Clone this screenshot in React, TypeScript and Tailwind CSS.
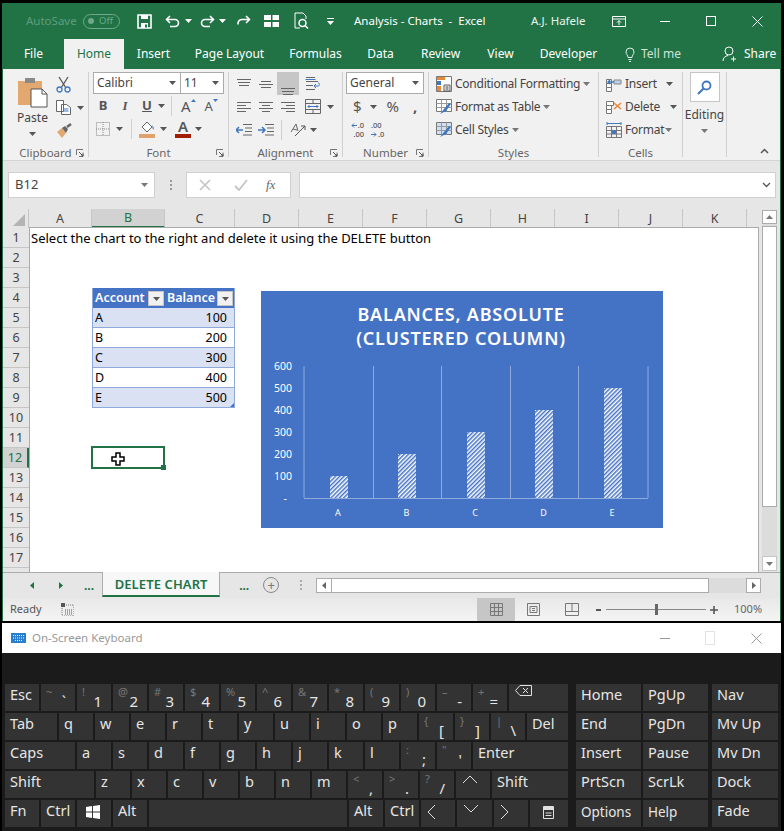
import type { ReactNode } from "react";

const GREEN = "#217346";

function Caret({ color = "#555", className = "" }: { color?: string; className?: string }) {
  return (
    <svg width="7" height="4" viewBox="0 0 7 4" className={`shrink-0 ${className}`}>
      <path d="M0 0h7L3.5 4z" fill={color} />
    </svg>
  );
}

function Launcher() {
  return (
    <svg width="8" height="8" viewBox="0 0 8 8" className="shrink-0">
      <path d="M0.5 6V0.5H7M7 3.5V7.5H3" fill="none" stroke="#777" />
      <path d="M3 3l4 4M5 7h2V5" fill="none" stroke="#555" />
    </svg>
  );
}

// horizontal text-alignment glyph
function Lines({ rows, color = "#666" }: { rows: [number, number, number][]; color?: string }) {
  return (
    <svg width="16" height="14" viewBox="0 0 16 14">
      {rows.map(([a, b, y]) => (
        <path key={y} d={`M${a} ${y + 0.5}H${b}`} stroke={color} />
      ))}
    </svg>
  );
}

function Group({ label, launcher, className, children }: { label: string; launcher?: boolean; className: string; children: ReactNode }) {
  return (
    <div className={`flex flex-col h-[85px] mt-[3px] border-r border-[#d0d0d0] ${className}`}>
      <div className="flex-1 flex flex-col min-h-0">{children}</div>
      <div className="h-[8px] flex items-center text-[11.5px] text-[#666] relative">
        <span className="flex-1 text-center">{label}</span>
        {launcher && <span className="absolute right-[4px] top-0 flex"><Launcher /></span>}
      </div>
    </div>
  );
}

function ListCmd({ icon, label, caretGap = "ml-[3px]" }: { icon: ReactNode; label: string; caretGap?: string }) {
  return (
    <div className="h-[23px] flex items-center text-[12px] text-[#444] tracking-[-0.25px]">
      <span className="w-[16px] h-[16px] flex mr-[3px]">{icon}</span>
      <span>{label}</span>
      <Caret className={caretGap} color="#777" />
    </div>
  );
}

function TitleBar() {
  return (
    <div className="h-[36px] flex items-center text-[#eaf3ee] text-[11.5px] shrink-0 whitespace-nowrap">
      <span className="ml-[23px] w-[50px] text-[11.5px] text-[#5f9c7c]">AutoSave</span>
      <span className="ml-[7px] w-[37px] h-[15px] rounded-full border border-[#6ea88a] flex items-center text-[9.5px] text-[#6ea88a] pl-[4px] gap-[5px]">
        <span className="w-[6px] h-[6px] rounded-full bg-[#6ea88a]" />
        Off
      </span>
      <svg width="15" height="15" viewBox="0 0 15 15" className="ml-[17px]">
        <path d="M1 1h13v13H1z" fill="none" stroke="#fff" strokeWidth="1.6" />
        <path d="M4 1h7v4H4zM4 9h7v5H4z" fill="#fff" />
        <path d="M8 10.5h2v3H8z" fill={GREEN} />
      </svg>
      <svg width="15" height="13" viewBox="0 0 15 13" className="ml-[13px]">
        <path d="M5 1L1.5 4.5 5 8M2 4.5h8a3.5 3.5 0 0 1 0 7H5" fill="none" stroke="#fff" strokeWidth="1.6" />
      </svg>
      <Caret color="#fff" className="ml-[5px]" />
      <svg width="15" height="13" viewBox="0 0 15 13" className="ml-[8px]">
        <path d="M10 1l3.5 3.5L10 8M13 4.5H5a3.5 3.5 0 0 0 0 7h5" fill="none" stroke="#fff" strokeWidth="1.6" />
      </svg>
      <Caret color="#fff" className="ml-[4px]" />
      <svg width="15" height="13" viewBox="0 0 15 13" className="ml-[10px]">
        <path d="M10 1l3.5 3.5L10 8M13 4.5H6a4 4 0 0 0-4 4v1" fill="none" stroke="#fff" strokeWidth="1.6" />
      </svg>
      <svg width="15" height="12" viewBox="0 0 15 12" className="ml-[13px]">
        <path d="M0 0h7v5H0zM8.500 0H15v5H8.500zM0 7h7v5H0zM8.500 7H15v5H8.500z" fill="#fff" />
      </svg>
      <svg width="15" height="18" viewBox="0 0 15 18" className="ml-[15px]">
        <path d="M1 1h8l3 3v3M1 1v15h5" fill="none" stroke="#fff" />
        <circle cx="8.5" cy="11" r="3.5" fill="none" stroke="#fff" strokeWidth="1.5" />
        <path d="M11 13.5l3 3" stroke="#fff" strokeWidth="1.5" />
      </svg>
      <svg width="7" height="7" viewBox="0 0 7 7" className="ml-[18px]">
        <path d="M0 0.5h7" stroke="#fff" />
        <path d="M0 3h7L3.5 7z" fill="#fff" />
      </svg>
      <span className="ml-[20px] w-[131px] text-[#fff]">Analysis - Charts&nbsp; -&nbsp; Excel</span>
      <span className="ml-[46px] w-[55px]">A.J. Hafele</span>
      <svg width="14" height="11" viewBox="0 0 14 11" className="ml-[26px]">
        <path d="M0.5 0.5h13v10H0.5zM0.5 3h13" fill="none" stroke="#fff" />
        <path d="M7 9V5M5 6.5l2-2 2 2" fill="none" stroke="#fff" />
      </svg>
      <span className="ml-[34px] w-[10px] h-px bg-white" />
      <span className="ml-[36px] w-[10px] h-[10px] border border-white" />
      <svg width="11" height="11" viewBox="0 0 11 11" className="ml-[36px]">
        <path d="M0.5 0.5l10 10M10.5 0.5l-10 10" stroke="#fff" />
      </svg>
    </div>
  );
}

function TabRow() {
  const tabs: [string, string][] = [
    ["Insert", "w-[59px]"],
    ["Page Layout", "w-[93px]"],
    ["Formulas", "w-[79px]"],
    ["Data", "w-[51px]"],
    ["Review", "w-[69px]"],
    ["View", "w-[51px]"],
    ["Developer", "w-[85px]"],
  ];
  return (
    <div className="h-[30px] flex items-center text-[12px] text-white shrink-0 whitespace-nowrap">
      <span className="w-[61px] text-center">File</span>
      <span className="w-[60px] h-full bg-[#f1f1f1] text-[#217346] flex items-center justify-center">Home</span>
      {tabs.map(([t, w]) => (
        <span key={t} className={`${w} text-center`}>{t}</span>
      ))}
      <svg width="10" height="15" viewBox="0 0 10 15" className="ml-[14px]">
        <path d="M3 10.5C3 8 1 7.5 1 5a4 4 0 0 1 8 0c0 2.500-2 3-2 5.500zM3.500 12.500h3M4 14.500h2" fill="none" stroke="#dfeee6" />
      </svg>
      <span className="ml-[6px] w-[45px] text-[#cfe3d8]">Tell me</span>
      <svg width="14" height="16" viewBox="0 0 14 16" className="ml-[36px]">
        <circle cx="7" cy="5" r="4" fill="none" stroke="#fff" />
        <path d="M1 15c0-3 2-5 5-5.500M9 13h5M11.500 10.500v5" fill="none" stroke="#fff" />
      </svg>
      <span className="ml-[8px]">Share</span>
    </div>
  );
}

function Clipboard() {
  return (
    <Group label="Clipboard" launcher className="w-[86px]">
      <div className="flex">
        <div className="w-[45px] ml-[7px] flex flex-col items-center">
          <svg width="30" height="31" viewBox="0 0 30 31" className="mt-[5px]">
            <path d="M0 4h24v24H0z" fill="#e2a86f" />
            <path d="M7 1h10v5H7z" fill="#8a8a8a" />
            <path d="M13 12h11l5 5v13H13z" fill="#fff" stroke="#555" />
            <path d="M24 12v5h5" fill="none" stroke="#555" />
          </svg>
          <span className="text-[12px] text-[#444] mt-[2px] leading-[16px]">Paste</span>
          <Caret className="mt-[6px]" />
        </div>
        <div className="flex flex-col ml-[1px] mt-[1px]">
          <div className="h-[23px] flex items-center">
            <svg width="15" height="17" viewBox="0 0 15 17">
              <path d="M3 1l7 11M12 1L5 12" stroke="#555" strokeWidth="1.300" fill="none" />
              <circle cx="3.500" cy="13.500" r="2.500" fill="none" stroke="#3f78c0" strokeWidth="1.300" />
              <circle cx="11.500" cy="13.500" r="2.500" fill="none" stroke="#3f78c0" strokeWidth="1.300" />
            </svg>
          </div>
          <div className="h-[23px] flex items-center gap-[6px]">
            <svg width="15" height="15" viewBox="0 0 15 15">
              <path d="M0.500 0.500h7v11h-7zM5.500 4.500h5l4 3v7h-9z" fill="#fff" stroke="#666" />
              <path d="M7.500 9h5M7.500 11h5" stroke="#3f78c0" />
            </svg>
            <Caret />
          </div>
          <div className="h-[23px] flex items-center">
            <svg width="16" height="15" viewBox="0 0 16 15">
              <path d="M1 9l5-4 4 5-4 5z" fill="#e2a86f" />
              <path d="M6 5l3-2 3 3-2 4z" fill="#666" />
              <path d="M11 4l4-3" stroke="#666" strokeWidth="2.500" />
            </svg>
          </div>
        </div>
      </div>
    </Group>
  );
}

function FontGroup() {
  const sep = <span className="w-px h-[20px] bg-[#d0d0d0]" />;
  return (
    <Group label="Font" launcher className="w-[140px]">
      <div className="flex ml-[4px] h-[22px] w-[131px] border border-[#ababab] bg-white text-[12px] text-[#444]">
        <div className="w-[87px] flex items-center justify-between pl-[3px] pr-[4px] border-r border-[#ababab]">
          Calibri
          <Caret />
        </div>
        <div className="flex-1 flex items-center justify-between pl-[3px] pr-[4px]">
          11
          <Caret />
        </div>
      </div>
      <div className="h-[22px] mt-[1px] flex items-center ml-[4px] text-[#555] text-[13px]">
        <span className="w-[20px] text-center font-bold">B</span>
        <span className="w-[24px] text-center italic font-['Liberation_Serif'] font-bold">I</span>
        <span className="w-[20px] text-center font-bold underline">U</span>
        <Caret className="ml-[1px]" />
        <span className="w-[6px]" />
        {sep}
        <span className="ml-[9px] text-[15px] leading-none">A</span>
        <svg width="5" height="3" viewBox="0 0 5 3" className="mb-[12px]"><path d="M0 3h5L2.500 0z" fill="#3f78c0" /></svg>
        <span className="ml-[9px] text-[13px] leading-none">A</span>
        <svg width="5" height="3" viewBox="0 0 5 3" className="mb-[12px]"><path d="M0 0h5L2.500 3z" fill="#3f78c0" /></svg>
      </div>
      <div className="h-[23px] flex items-center ml-[7px]">
        <svg width="14" height="14" viewBox="0 0 14 14">
          <path d="M0.500 0.500h13v13h-13zM7 0v14M0 7h14" fill="none" stroke="#888" strokeDasharray="1 1" />
        </svg>
        <Caret className="ml-[6px]" />
        <span className="w-[8px]" />
        {sep}
        <svg width="17" height="18" viewBox="0 0 17 18" className="ml-[7px]">
          <path d="M3 7l5-5 5 5-5 5z" fill="#fff" stroke="#666" />
          <path d="M13 5l2 3-1 2z" fill="#3f78c0" />
          <path d="M0 14h16v4H0z" fill="#e2a06a" />
        </svg>
        <Caret className="ml-[4px]" />
        <span className="ml-[8px] flex flex-col items-center w-[16px] leading-none">
          <span className="text-[15px] text-[#555] font-semibold leading-[13px]">A</span>
          <span className="w-[16px] h-[4px] bg-[#a31e00] mt-[1px]" />
        </span>
        <Caret className="ml-[4px]" />
      </div>
    </Group>
  );
}

const top3: [number, number, number][] = [[1, 15, 2], [2, 14, 5], [3, 13, 8]];
const mid3: [number, number, number][] = [[3, 13, 4], [1, 15, 7], [3, 13, 10]];
const bot3: [number, number, number][] = [[1, 15, 7], [2, 14, 10], [3, 13, 13]];
const leftL: [number, number, number][] = [[1, 15, 2], [1, 10, 5], [1, 15, 8], [1, 10, 11]];
const midL: [number, number, number][] = [[1, 15, 2], [4, 12, 5], [1, 15, 8], [4, 12, 11]];
const rightL: [number, number, number][] = [[1, 15, 2], [6, 15, 5], [1, 15, 8], [6, 15, 11]];

function Alignment() {
  return (
    <Group label="Alignment" launcher className="w-[114px]">
      <div className="flex items-center ml-[4px] h-[23px]">
        <span className="w-[22px] flex justify-center"><Lines rows={top3} /></span>
        <span className="w-[22px] flex justify-center"><Lines rows={mid3} /></span>
        <span className="w-[22px] h-[23px] bg-[#c6c6c6] flex justify-center items-end"><Lines rows={bot3} /></span>
        <svg width="16" height="16" viewBox="0 0 16 16" className="ml-[6px]">
          <path d="M1 1.500h9M1 5.500h12M1 9.500h7M1 13.500h9" stroke="#666" />
          <path d="M0.500 3.500h10M13 7c2 0 2 3 0 3H9M11 8l-2 2 2 2" fill="none" stroke="#3f78c0" />
        </svg>
      </div>
      <div className="flex items-center ml-[4px] h-[23px]">
        <span className="w-[22px] flex justify-center"><Lines rows={leftL} /></span>
        <span className="w-[22px] flex justify-center"><Lines rows={midL} /></span>
        <span className="w-[22px] flex justify-center"><Lines rows={rightL} /></span>
        <svg width="16" height="15" viewBox="0 0 16 15" className="ml-[6px]">
          <path d="M0.500 0.500h15v14h-15zM0.500 4.500h15M0.500 10.500h15M8 0.500v4M8 10.500v4" fill="none" stroke="#666" />
          <path d="M3 7.500h10M4.500 6l-1.500 1.500L4.500 9M11.500 6l1.500 1.500L11.500 9" fill="none" stroke="#3f78c0" />
        </svg>
        <Caret className="ml-[6px]" />
      </div>
      <div className="flex items-center ml-[4px] h-[23px]">
        <svg width="16" height="14" viewBox="0 0 16 14" className="mx-[3px]">
          <path d="M7 1.500h9M9 5h7M9 8.500h7M7 12h9" stroke="#666" />
          <path d="M0 7h7M3 4L0 7l3 3" fill="none" stroke="#3f78c0" strokeWidth="1.500" />
        </svg>
        <svg width="16" height="14" viewBox="0 0 16 14" className="ml-[3px]">
          <path d="M7 1.500h9M9 5h7M9 8.500h7M7 12h9" stroke="#666" />
          <path d="M0 7h7M4 4l3 3-3 3" fill="none" stroke="#3f78c0" strokeWidth="1.500" />
        </svg>
        <span className="ml-[7px] w-px h-[20px] bg-[#d0d0d0]" />
        <svg width="17" height="16" viewBox="0 0 17 16" className="ml-[8px]">
          <path d="M1 10l5-8 2 7M3 7l4 1" fill="none" stroke="#666" />
          <path d="M5 14L15 4M11 4h4v4" fill="none" stroke="#555" />
        </svg>
        <Caret className="ml-[3px]" />
      </div>
    </Group>
  );
}

function NumberGroup() {
  return (
    <Group label="Number" launcher className="w-[86px]">
      <div className="ml-[3px] w-[78px] h-[22px] border border-[#ababab] bg-white text-[12px] text-[#444] flex items-center justify-between pl-[3px] pr-[4px]">
        General
        <Caret />
      </div>
      <div className="h-[23px] mt-[1px] flex items-center text-[15px] text-[#555]">
        <span className="ml-[10px]">$</span>
        <Caret className="ml-[8px]" />
        <span className="ml-[10px]">%</span>
        <span className="ml-[14px] font-bold leading-none">,</span>
      </div>
      <div className="h-[23px] flex items-center text-[7.5px] text-[#555] font-medium">
        <span className="ml-[6px] w-[15px] flex flex-col items-end gap-[1px]">
          <span className="flex items-center gap-px h-[8px] leading-[8px]">
            <svg width="6" height="5" viewBox="0 0 6 5"><path d="M6 2.500H1M3 0.500L1 2.500l2 2" fill="none" stroke="#3f78c0" /></svg>
            .0
          </span>
          <span className="h-[8px] leading-[8px]">.00</span>
        </span>
        <span className="ml-[7px] w-[15px] flex flex-col items-start gap-[1px]">
          <span className="h-[8px] leading-[8px]">.00</span>
          <span className="flex items-center gap-px h-[8px] leading-[8px]">
            <svg width="6" height="5" viewBox="0 0 6 5"><path d="M0 2.500h5M3 0.500l2 2-2 2" fill="none" stroke="#3f78c0" /></svg>
            .0
          </span>
        </span>
      </div>
    </Group>
  );
}

function GridIcon({ accent }: { accent: string }) {
  return (
    <svg width="16" height="16" viewBox="0 0 16 16">
      <path d="M0.500 0.500h15v12h-15z" fill={accent} stroke="#777" />
      <path d="M0.500 4.500h15M0.500 8.500h15M5.500 0.500v12M10.500 0.500v12" stroke="#999" />
      <path d="M4 15l4-5 5-6 2 1-5 7z" fill="#3f78c0" />
    </svg>
  );
}

function Styles() {
  return (
    <Group label="Styles" className="w-[170px]">
      <div className="ml-[7px] flex flex-col">
        <ListCmd
          label="Conditional Formatting"
          icon={
            <svg width="16" height="16" viewBox="0 0 16 16">
              <path d="M0.500 0.500h15v15h-15z" fill="#fff" stroke="#777" />
              <path d="M1 1h8v3H1z" fill="#e58a3c" />
              <path d="M1 5h4v4H1z" fill="#3f78c0" />
              <path d="M1 10h4v5H1z" fill="#e58a3c" />
              <path d="M8 9h6v6H8z" fill="#fff" stroke="#555" />
              <path d="M9.500 11h3M9.500 13h3" stroke="#333" />
            </svg>
          }
        />
        <ListCmd label="Format as Table" icon={<GridIcon accent="#fff" />} />
        <ListCmd label="Cell Styles" icon={<GridIcon accent="#cfe0f3" />} />
      </div>
    </Group>
  );
}

function Cells() {
  return (
    <Group label="Cells" className="w-[84px]">
      <div className="ml-[7px] flex flex-col">
        <div className="h-[23px] flex items-center text-[12px] text-[#444] tracking-[-0.25px]">
          <svg width="16" height="16" viewBox="0 0 16 16" className="mr-[3px]">
            <path d="M0.500 3.500h5v4h-5zM0.500 7.500h5v4h-5zM0.500 11.500h5v4h-5z" fill="#fff" stroke="#777" />
            <path d="M8 4h7v4H8z" fill="#bcd0ea" stroke="#888" />
            <path d="M8 6H2M4 4L2 6l2 2" fill="none" stroke="#3f78c0" strokeWidth="1.400" />
          </svg>
          <span className="w-[41px]">Insert</span>
          <Caret />
        </div>
        <div className="h-[23px] flex items-center text-[12px] text-[#444] tracking-[-0.25px]">
          <svg width="16" height="16" viewBox="0 0 16 16" className="mr-[3px]">
            <path d="M0.500 2.500h7v4h-7zM0.500 6.500h5v4h-5zM0.500 10.500h5v4h-5z" fill="#fff" stroke="#777" />
            <path d="M8 4l7 6M15 4l-7 6" stroke="#e58a3c" strokeWidth="1.600" />
          </svg>
          <span className="w-[45px]">Delete</span>
          <Caret />
        </div>
        <div className="h-[23px] flex items-center text-[12px] text-[#444] tracking-[-0.25px]">
          <svg width="16" height="16" viewBox="0 0 16 16" className="mr-[3px]">
            <path d="M1 1.500h14M1 0v3M15 0v3" stroke="#3f78c0" />
            <path d="M0.500 4.500h15v11h-15zM0.500 8.500h15M0.500 12h15M5.500 4.500v11M10.500 4.500v11" fill="none" stroke="#777" />
            <path d="M6 8.500h4v3.500H6z" fill="#3f78c0" />
          </svg>
          <span className="w-[40px]">Format</span>
          <Caret color="#777" />
        </div>
      </div>
    </Group>
  );
}

function Editing() {
  return (
    <Group label="" className="w-[44px]">
      <div className="flex flex-col items-center text-[12px] text-[#444]">
        <div className="w-[30px] h-[30px] bg-white border border-[#c6c6c6] flex items-center justify-center">
          <svg width="15" height="15" viewBox="0 0 15 15">
            <circle cx="9.500" cy="5.500" r="4" fill="none" stroke="#3f78c0" strokeWidth="1.800" />
            <path d="M6.500 8.500L1 14" stroke="#3f78c0" strokeWidth="2.200" />
          </svg>
        </div>
        <span className="mt-[5px] leading-[16px]">Editing</span>
        <Caret className="mt-[6px]" color="#777" />
      </div>
    </Group>
  );
}

function Ribbon() {
  return (
    <div className="h-[92px] bg-[#f1f1f1] border-b border-[#d4d4d4] flex font-['Noto_Sans',sans-serif] shrink-0 relative whitespace-nowrap">
      <Clipboard />
      <FontGroup />
      <Alignment />
      <NumberGroup />
      <Styles />
      <Cells />
      <Editing />
      <svg width="9" height="6" viewBox="0 0 9 6" className="absolute right-[11px] bottom-[6px]">
        <path d="M1 5l3.500-3.500L8 5" fill="none" stroke="#555" strokeWidth="1.500" />
      </svg>
    </div>
  );
}

function FormulaBar() {
  return (
    <div className="h-[48px] bg-[#e6e6e6] flex items-start pt-[11px] pl-[5px] shrink-0">
      <div className="w-[147px] h-[26px] bg-white border border-[#d0d0d0] flex items-center justify-between pl-[6px] pr-[6px] text-[13px] text-[#444]">
        B12
        <Caret color="#777" />
      </div>
      <span className="ml-[15px] mt-[8px] w-[2px] h-[10px] border-l-2 border-dotted border-[#999]" />
      <div className="ml-[14px] w-[105px] h-[26px] bg-white border border-[#d0d0d0] flex items-center text-[#c4c4c4]">
        <svg width="12" height="12" viewBox="0 0 12 12" className="ml-[12px]">
          <path d="M1 1l10 10M11 1L1 11" stroke="#c4c4c4" strokeWidth="1.600" />
        </svg>
        <svg width="14" height="12" viewBox="0 0 14 12" className="ml-[23px]">
          <path d="M1 7l4 4 8-10" fill="none" stroke="#c4c4c4" strokeWidth="1.800" />
        </svg>
        <span className="ml-[18px] font-['Liberation_Serif',serif] italic text-[13px] text-[#666]">fx</span>
      </div>
      <div className="ml-[8px] w-[477px] h-[26px] bg-white border border-[#d0d0d0] flex items-center justify-end pr-[4px]">
        <svg width="9" height="6" viewBox="0 0 9 6">
          <path d="M1 1l3.500 3.500L8 1" fill="none" stroke="#555" strokeWidth="1.300" />
        </svg>
      </div>
    </div>
  );
}

function ColumnHeaders() {
  const cols: [string, string][] = [
    ["A", "w-[63px]"],
    ["B", "w-[73px]"],
    ["C", "w-[70px]"],
    ["D", "w-[64px]"],
    ["E", "w-[64px]"],
    ["F", "w-[64px]"],
    ["G", "w-[64px]"],
    ["H", "w-[64px]"],
    ["I", "w-[64px]"],
    ["J", "w-[64px]"],
    ["K", "w-[64px]"],
  ];
  return (
    <div className="h-[19px] flex bg-[#e6e6e6] text-[12.5px] text-[#444] shrink-0">
      <div className="w-[26px] flex items-end justify-end border-r border-[#c6c6c6] pr-[3px] pb-[2px]">
        <svg width="12" height="12" viewBox="0 0 12 12"><path d="M12 0v12H0z" fill="#b4b4b4" /></svg>
      </div>
      {cols.map(([c, w]) => (
        <div
          key={c}
          className={`${w} flex items-center justify-center pt-px border-r border-[#c6c6c6] ${c === "B" ? "bg-[#d2d2d2] border-b-2 border-b-[#217346] text-[#217346]" : ""}`}
        >
          {c}
        </div>
      ))}
    </div>
  );
}

function FilterBtn() {
  return (
    <span className="w-[16px] h-[15px] bg-[#f1f1f1] border border-[#c6c6c6] flex items-center justify-center shrink-0">
      <Caret color="#555" />
    </span>
  );
}

function AccountTable() {
  const rows: [string, number][] = [["A", 100], ["B", 200], ["C", 300], ["D", 400], ["E", 500]];
  return (
    <div className="col-start-2 col-span-2 row-start-4 row-span-6 border-x border-[#8ea9db] relative text-[12.5px] text-black">
      <div className="h-[20px] bg-[#4472c4] text-white font-semibold flex items-center pl-[2px] pt-px">
        <span className="w-[53px]">Account</span>
        <FilterBtn />
        <span className="w-[48px] ml-[3px]">Balance</span>
        <span className="ml-[2px] flex"><FilterBtn /></span>
      </div>
      {rows.map(([a, v], i) => (
        <div key={a} className={`h-[20px] flex items-center justify-between pl-[2px] pr-[7px] pt-[2px] border-b border-[#8ea9db] ${i % 2 === 0 ? "bg-[#d9e1f2]" : "bg-white"}`}>
          <span>{a}</span>
          <span>{v}</span>
        </div>
      ))}
      <svg width="4" height="4" viewBox="0 0 4 4" className="absolute right-0 bottom-[1px]"><path d="M4 0v4H0z" fill="#4472c4" /></svg>
    </div>
  );
}

function Chart() {
  const bars: [number, number][] = [[69, 22], [137, 44], [206, 66], [274, 88], [343, 110]];
  const xs = [43, 112.500, 180.500, 249.500, 317.500, 387];
  return (
    <svg width="402" height="237" viewBox="0 0 402 237" className="absolute left-[231px] top-[63px]">
      <defs>
        <pattern id="hatch" width="3" height="3" patternUnits="userSpaceOnUse" patternTransform="rotate(-45)">
          <rect width="3" height="3" fill="#fff" />
          <rect width="3" height="1.500" fill="#4472c4" />
        </pattern>
      </defs>
      <rect width="402" height="237" fill="#4472c4" />
      <g fill="#fff" fontFamily="'Noto Sans', sans-serif" fontWeight="600" fontSize="18" textAnchor="middle" letterSpacing="0.8">
        <text x="200" y="30">BALANCES, ABSOLUTE</text>
        <text x="200" y="54">(CLUSTERED COLUMN)</text>
      </g>
      {xs.map((x) => (
        <path key={x} d={`M${x} 75V207`} stroke="#8faadc" />
      ))}
      <path d="M43 207.500H387" stroke="#8faadc" />
      {bars.map(([x, h]) => (
        <rect key={x} x={x} y={207 - h} width="18" height={h} fill="url(#hatch)" />
      ))}
      <g fill="#fff" fontFamily="'Noto Sans', sans-serif" fontSize="10.500" textAnchor="end">
        {[600, 500, 400, 300, 200, 100].map((v, i) => (
          <text key={v} x="31" y={79 + i * 22}>{v}</text>
        ))}
        <text x="26" y="211">-</text>
      </g>
      <g fill="#fff" fontFamily="'Noto Sans', sans-serif" fontSize="9" textAnchor="middle">
        {["A", "B", "C", "D", "E"].map((c, i) => (
          <text key={c} x={77 + i * 68.500} y="225">{c}</text>
        ))}
      </g>
    </svg>
  );
}

function Sheet() {
  const nums = Array.from({ length: 17 }, (_, i) => i + 1);
  return (
    <div className="h-[344px] flex shrink-0">
      <div className="w-[26px] bg-[#e6e6e6] shrink-0 flex flex-col">
        {nums.map((n) => (
          <div
            key={n}
            className={`h-[20px] shrink-0 flex items-center justify-center pt-[2px] text-[12.5px] border-b border-[#c6c6c6] ${n === 12 ? "bg-[#d2d2d2] text-[#217346] border-r-2 border-r-[#217346]" : "text-[#444]"}`}
          >
            {n}
          </div>
        ))}
      </div>
      <div className="w-[730px] -mt-px shrink-0 bg-white border-l border-t border-r border-[#ababab] relative grid grid-cols-[62px_73px_70px_1fr] grid-rows-[repeat(17,20px)] font-['Noto_Sans',sans-serif]">
        <div className="col-start-1 col-span-4 row-start-1 pl-px text-[13px] leading-[20px] text-black whitespace-nowrap">
          Select the chart to the right and delete it using the DELETE button
        </div>
        <AccountTable />
        <div className="col-start-2 row-start-12 -ml-px -mt-[2px] h-[23px] border-2 border-[#217346] relative flex items-center justify-center">
          <svg width="14" height="14" viewBox="0 0 14 14" className="-ml-[20px] mt-[3px]">
            <path d="M5 1h4v4h4v4H9v4H5V9H1V5h4z" fill="#fff" stroke="#000" strokeWidth="1.500" />
          </svg>
          <span className="absolute -right-[3px] -bottom-[3px] w-[5px] h-[5px] bg-[#217346]" />
        </div>
        <Chart />
      </div>
    </div>
  );
}

// runs beside the column headers and the grid
function VScroll() {
  return (
    <div className="w-[15px] ml-[3px] mt-px h-[361px] bg-[#dcdcdc] flex flex-col shrink-0">
      <div className="h-[14px] bg-white border border-[#ababab] flex items-center justify-center">
        <svg width="7" height="4" viewBox="0 0 7 4"><path d="M0 4h7L3.500 0z" fill="#777" /></svg>
      </div>
      <div className="h-[281px] mt-[2px] bg-white border border-[#ababab]" />
      <div className="flex-1" />
      <div className="h-[15px] bg-white border border-[#c6c6c6] flex items-center justify-center">
        <Caret color="#777" />
      </div>
    </div>
  );
}

function SheetTabs() {
  return (
    <div className="h-[26px] bg-[#e6e6e6] border-t border-[#ababab] flex items-start text-[#217346] shrink-0">
      <svg width="4" height="7" viewBox="0 0 4 7" className="ml-[27px] mt-[9px]"><path d="M4 0v7L0 3.500z" fill="#217346" /></svg>
      <svg width="4" height="7" viewBox="0 0 4 7" className="ml-[25px] mt-[9px]"><path d="M0 0v7l4-3.500z" fill="#217346" /></svg>
      <span className="ml-[21px] mt-[4px] font-bold text-[12px]">...</span>
      <div className="ml-[8px] w-[118px] h-[25px] -mt-px pt-[2px] bg-[#f7f7f7] border-x border-[#ababab] border-b-2 border-b-[#217346] flex items-center justify-center text-[13px] font-semibold tracking-[0.1px]">
        DELETE CHART
      </div>
      <span className="ml-[19px] mt-[4px] font-bold text-[12px]">...</span>
      <span className="ml-[14px] mt-[4px] w-[16px] h-[16px] rounded-full border border-[#888] flex items-center justify-center text-[#777] text-[13px] leading-none">+</span>
      <span className="ml-[21px] mt-[7px] w-[2px] h-[10px] border-l-2 border-dotted border-[#aaa]" />
      <div className="ml-[14px] mt-[5px] w-[445px] h-[15px] flex bg-[#dcdcdc]">
        <span className="w-[16px] bg-white border border-[#ababab] flex items-center justify-center">
          <svg width="4" height="7" viewBox="0 0 4 7"><path d="M4 0v7L0 3.500z" fill="#666" /></svg>
        </span>
        <span className="w-[377px] bg-white border-y border-r border-[#ababab]" />
        <span className="flex-1" />
        <span className="w-[15px] bg-white border border-[#ababab] flex items-center justify-center">
          <svg width="4" height="7" viewBox="0 0 4 7"><path d="M0 0v7l4-3.500z" fill="#666" /></svg>
        </span>
      </div>
    </div>
  );
}

function StatusBar() {
  return (
    <div className="h-[23px] bg-gradient-to-b from-[#e8e8e8] to-[#f4f4f4] flex items-center text-[11px] text-[#555] shrink-0">
      <span className="ml-[7px] w-[31px]">Ready</span>
      <svg width="13" height="13" viewBox="0 0 13 13" className="ml-[20px]">
        <path d="M0 0h4v4H0z" fill="#555" />
        <path d="M5 2h8v11H1V5" fill="none" stroke="#777" strokeDasharray="1 1" />
        <path d="M4 7h7M4 9h7M4 11h7" stroke="#555" strokeDasharray="1 1" />
      </svg>
      <span className="ml-[403px] w-[38px] h-[23px] bg-[#c6c6c6] flex items-center justify-center">
        <svg width="13" height="13" viewBox="0 0 13 13">
          <path d="M0.500 0.500h12v12h-12zM4.500 0.500v12M8.500 0.500v12M0.500 4.500h12M0.500 8.500h12" fill="none" stroke="#777" />
        </svg>
      </span>
      <svg width="13" height="13" viewBox="0 0 13 13" className="ml-[12px]">
        <path d="M0.500 0.500h12v12h-12z" fill="none" stroke="#777" />
        <path d="M3 3.500h7v6H3zM5 5.500h3M5 7.500h3" fill="none" stroke="#777" />
      </svg>
      <svg width="14" height="13" viewBox="0 0 14 13" className="ml-[25px]">
        <path d="M0.500 0.500h13v12h-13zM0.500 8.500h13M7 0.500v8" fill="none" stroke="#777" />
      </svg>
      <span className="ml-[17px] w-[5px] h-[2px] bg-[#555]" />
      <span className="ml-[5px] w-[100px] h-px bg-[#888] relative flex justify-center">
        <span className="absolute -top-[5px] w-[3px] h-[11px] bg-[#666]" />
      </span>
      <svg width="8" height="8" viewBox="0 0 8 8" className="ml-[4px]"><path d="M4 0v8M0 4h8" stroke="#555" strokeWidth="1.600" /></svg>
      <span className="ml-[16px] text-[#666]">100%</span>
    </div>
  );
}

type KeyDef = { l?: string; w?: string; s?: string; d?: string; icon?: ReactNode };

const K34 = "w-[34px]";
const letters = (s: string): KeyDef[] => s.split("").map((l) => ({ l }));
const dual = (pairs: [string, string][]): KeyDef[] => pairs.map(([s, d]) => ({ s, d }));

const row1: KeyDef[] = [
  { l: "Esc" },
  ...dual([["~", "`"], ["!", "1"], ["@", "2"], ["#", "3"], ["$", "4"], ["%", "5"], ["^", "6"], ["&", "7"], ["*", "8"], ["(", "9"], [")", "0"], ["–", "-"], ["+", "="]]),
  {
    w: "flex-1",
    icon: (
      <svg width="17" height="11" viewBox="0 0 17 11" className="ml-[1px] mt-[1px]">
        <path d="M5 0.500h11.500v10H5L0.500 5.500zM8 3l5 5M13 3L8 8" fill="none" stroke="#e0e0e0" />
      </svg>
    ),
  },
];
const row2: KeyDef[] = [
  { l: "Tab", w: "w-[52px]" },
  ...letters("qwertyuiop"),
  ...dual([["{", "["], ["}", "]"], ["|", "\\"]]),
  { l: "Del", w: "flex-1" },
];
const row3: KeyDef[] = [
  { l: "Caps", w: "w-[70px]" },
  ...letters("asdfghjkl"),
  ...dual([[":", ";"], ['"', "'"]]),
  { l: "Enter", w: "flex-1" },
];
const row4: KeyDef[] = [
  { l: "Shift", w: "w-[89px]" },
  ...letters("zxcvbnm"),
  ...dual([["<", ","], [">", "."], ["?", "/"]]),
  {
    icon: (
      <svg width="16" height="9" viewBox="0 0 16 9" className="ml-[1px] mt-[4px]">
        <path d="M1 8l7-7 7 7" fill="none" stroke="#e0e0e0" />
      </svg>
    ),
  },
  { l: "Shift", w: "flex-1" },
];
const row5: KeyDef[] = [
  { l: "Fn" },
  { l: "Ctrl" },
  {
    icon: (
      <svg width="14" height="14" viewBox="0 0 14 14" className="ml-[4px] mt-[5px]">
        <path d="M0 2l6-1v5.500H0zM7 1l7-1v6.500H7zM0 7.500h6V13l-6-1zM7 7.500h7V14l-7-1z" fill="#fff" />
      </svg>
    ),
  },
  { l: "Alt" },
  { w: "w-[198px]" },
  { l: "Alt" },
  { l: "Ctrl" },
  {
    icon: (
      <svg width="9" height="16" viewBox="0 0 9 16" className="ml-[1px] mt-[4px]">
        <path d="M8 1L1 8l7 7" fill="none" stroke="#e0e0e0" />
      </svg>
    ),
  },
  {
    w: "w-[35px]",
    icon: (
      <svg width="16" height="9" viewBox="0 0 16 9" className="ml-[1px] mt-[4px]">
        <path d="M1 1l7 7 7-7" fill="none" stroke="#e0e0e0" />
      </svg>
    ),
  },
  {
    icon: (
      <svg width="9" height="16" viewBox="0 0 9 16" className="ml-[1px] mt-[4px]">
        <path d="M1 1l7 7-7 7" fill="none" stroke="#e0e0e0" />
      </svg>
    ),
  },
  {
    w: "flex-1",
    icon: (
      <svg width="11" height="13" viewBox="0 0 11 13" className="ml-[8px] mt-[6px]">
        <path d="M0.500 0.500h10v12h-10z" fill="none" stroke="#e0e0e0" />
        <path d="M0 1h11v3H0z" fill="#e0e0e0" />
        <path d="M2.500 7h6M2.500 9.500h6" stroke="#e0e0e0" />
      </svg>
    ),
  },
];

function Key({ k }: { k: KeyDef }) {
  const width = k.w ?? K34;
  if (k.s) {
    return (
      <div className={`${width} h-[27px] bg-[#333] flex justify-between pl-[5px] pr-[9px] shrink-0`}>
        <span className="text-[11px] leading-[16px] text-[#777]">{k.s}</span>
        <span className="text-[15px] leading-[19px] text-[#e6e6e6] self-end">{k.d}</span>
      </div>
    );
  }
  return (
    <div className={`${width} h-[27px] bg-[#333] pl-[5px] text-[14.5px] leading-[21px] text-[#e6e6e6] ${k.icon ? "flex items-start" : ""} ${k.w === "flex-1" ? "" : "shrink-0"}`}>
      {k.icon ?? k.l}
    </div>
  );
}

const side: [string, string, string][] = [
  ["Home", "PgUp", "Nav"],
  ["End", "PgDn", "Mv Up"],
  ["Insert", "Pause", "Mv Dn"],
  ["PrtScn", "ScrLk", "Dock"],
  ["Options", "Help", "Fade"],
];

function Keyboard() {
  return (
    <div className="flex-1 bg-[#1b1b1b] font-['Noto_Sans',sans-serif] flex flex-col min-h-0">
      <div className="h-[30px] bg-white flex items-center shrink-0 text-[11.5px] text-[#999] whitespace-nowrap">
        <svg width="15" height="10" viewBox="0 0 15 10" className="ml-[9px]">
          <path d="M0 0h15v10H0z" fill="#2a7fd0" />
          <path d="M2 2.500h11M2 5h11M4 7.500h7" stroke="#fff" strokeDasharray="1 1" />
        </svg>
        <span className="ml-[6px] w-[110px]">On-Screen Keyboard</span>
        <span className="ml-[518px] w-[10px] h-px bg-[#999]" />
        <span className="ml-[35px] w-[10px] h-[14px] border border-[#e3e3e3]" />
        <svg width="11" height="11" viewBox="0 0 11 11" className="ml-[36px]">
          <path d="M0.500 0.500l10 10M10.500 0.500l-10 10" stroke="#999" />
        </svg>
      </div>
      <div className="flex pl-[3px] pt-[31px] gap-[8px]">
        <div className="w-[563px] flex flex-col gap-[2px]">
          {[row1, row2, row3, row4, row5].map((row, i) => (
            <div key={i} className="flex gap-[2px]">
              {row.map((k, j) => (
                <Key key={j} k={k} />
              ))}
            </div>
          ))}
        </div>
        <div className="flex flex-col gap-[2px]">
          {side.map(([a, b, c]) => (
            <div key={a} className="flex text-[#e6e6e6] text-[14.5px] leading-[21px]">
              <span className={`w-[65px] h-[27px] bg-[#333] pl-[5px] ${a === "Options" ? "text-[13.5px] leading-[24px]" : ""}`}>{a}</span>
              <span className={`ml-[2px] w-[65px] h-[27px] bg-[#333] pl-[5px] ${a === "Options" ? "text-[13.5px] leading-[24px]" : ""}`}>{b}</span>
              <span className="ml-[4px] w-[66px] h-[27px] bg-[#333] pl-[5px]">{c}</span>
            </div>
          ))}
        </div>
      </div>
    </div>
  );
}

export default function App() {
  return (
    <div className="w-[784px] h-[831px] bg-black pt-[3px] pl-[2px] pr-[3px] flex flex-col overflow-hidden font-['Noto_Sans',sans-serif]">
      <div className="h-[618px] bg-[#217346] border-x border-[#217346] flex flex-col shrink-0">
        <TitleBar />
        <TabRow />
        <Ribbon />
        <FormulaBar />
        <div className="flex h-[363px] bg-[#e6e6e6] shrink-0">
          <div className="w-[756px] shrink-0 flex flex-col">
            <ColumnHeaders />
            <Sheet />
          </div>
          <VScroll />
        </div>
        <SheetTabs />
        <StatusBar />
      </div>
      <div className="h-[2px] bg-black shrink-0" />
      <Keyboard />
    </div>
  );
}
